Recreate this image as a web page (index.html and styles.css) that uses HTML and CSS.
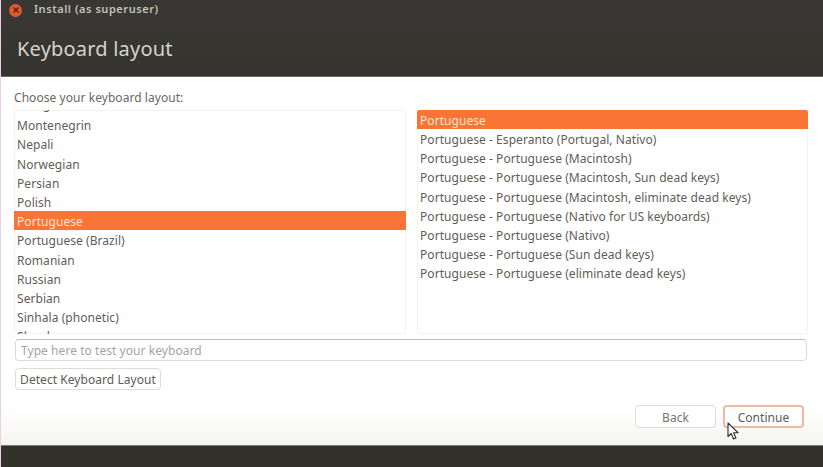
FILE: index.html
```html
<!DOCTYPE html>
<html lang="en">
<head>
<meta charset="utf-8">
<title>Install (as superuser)</title>
<link rel="stylesheet" href="styles.css">
</head>
<body>
<div class="window">
  <header class="titlebar">
    <span class="close"><svg width="8" height="8" viewBox="0 0 8 8"><path d="M1.5 1.5l5 5M6.5 1.5l-5 5" stroke="#4a2116" stroke-width="1.4" fill="none"/></svg></span>
    <span class="title">Install (as superuser)</span>
  </header>
  <div class="heading"><h1>Keyboard layout</h1></div>
  <main class="content">
    <label class="prompt">Choose your keyboard layout:</label>
    <div class="lists">
      <div class="list left">
        <ul class="rows scrolled">
          <li class="clipped">Mongolian</li><li>Montenegrin</li><li>Nepali</li><li>Norwegian</li><li>Persian</li><li>Polish</li>
          <li class="selected">Portuguese</li>
          <li>Portuguese (Brazil)</li><li>Romanian</li><li>Russian</li><li>Serbian</li><li>Sinhala (phonetic)</li><li>Slovak</li>
        </ul>
      </div>
      <div class="list right">
        <ul class="rows">
          <li class="selected">Portuguese</li>
          <li>Portuguese - Esperanto (Portugal, Nativo)</li>
          <li>Portuguese - Portuguese (Macintosh)</li>
          <li>Portuguese - Portuguese (Macintosh, Sun dead keys)</li>
          <li>Portuguese - Portuguese (Macintosh, eliminate dead keys)</li>
          <li>Portuguese - Portuguese (Nativo for US keyboards)</li>
          <li>Portuguese - Portuguese (Nativo)</li>
          <li>Portuguese - Portuguese (Sun dead keys)</li>
          <li>Portuguese - Portuguese (eliminate dead keys)</li>
        </ul>
      </div>
    </div>
    <input class="test" type="text" placeholder="Type here to test your keyboard">
    <button class="btn detect" type="button">Detect Keyboard Layout</button>
    <div class="actions">
      <button class="btn back" type="button">Back</button>
      <button class="btn continue" type="button">Continue</button>
    </div>
    <svg class="cursor" width="13" height="19" viewBox="0 0 13 19"><path d="M1 1v13.5l3.2-3 2.3 5.5 2.4-1-2.3-5.3h4.4z" fill="#fff" stroke="#2b2b2b" stroke-width="1.1" stroke-linejoin="round"/></svg>
  </main>
  <footer class="bottombar"></footer>
</div>
</body>
</html>
```
FILE: styles.css
```css
* { box-sizing: border-box; }
html, body { margin: 0; height: 100%; }
body {
  background: #e9cfe0;
  font-family: "Noto Sans", "Open Sans", sans-serif;
  font-size: 12px;
  letter-spacing: 0.055px;
  color: #5f5d57;
  overflow: hidden;
}
.window {
  margin-left: 1px;
  height: 467px;
  display: flex;
  flex-direction: column;
  background: #fff;
}
.titlebar {
  height: 20px;
  flex: none;
  display: flex;
  align-items: center;
  gap: 12px;
  padding-left: 8px;
  background: #383733;
  color: #c4c1b7;
  font-weight: 600;
  font-size: 11px;
}
.close {
  width: 13px;
  height: 13px;
  border-radius: 50%;
  background: #e2592c;
  display: flex;
  align-items: center;
  justify-content: center;
}
.title { letter-spacing: 0.55px; margin-bottom: 3px; }
.heading {
  height: 57px;
  flex: none;
  display: flex;
  align-items: center;
  padding: 1px 0 0 16px;
  background: linear-gradient(#383733, #34332e);
  border-bottom: 1px solid #6b6a64;
}
h1 {
  margin: 0;
  font-weight: 400;
  font-size: 20px;
  letter-spacing: 0.2px;
  color: #d6d3c9;
}
.content {
  position: relative;
  flex: 1;
  padding: 13px 15px 0 13px;
  display: flex;
  flex-direction: column;
  background: linear-gradient(#fff 0, #fff 90%, #f4f4f2 100%);
}
.prompt { height: 20px; line-height: 16.5px; color: #6a6862; }
.lists {
  display: flex;
  gap: 11px;
  height: 224px;
}
.list {
  overflow: hidden;
  box-shadow: inset 0 0 0 1px #f3f3f1;
  border-radius: 2px;
}
.left { flex: 0 0 392px; }
.right { flex: 1 1 0; }
.rows { margin: 0; padding: 0; list-style: none; }
.rows li {
  height: 19.2px;
  line-height: 21px;
  padding-left: 3px;
  white-space: nowrap;
}
.rows .clipped { line-height: 17px; }
.right .rows li { height: 19.15px; }
.scrolled { margin-top: -14px; }
.rows .selected { background: #fa7436; color: #fbe3d2; }
.test {
  margin: 5px 0 0 1px;
  height: 22px;
  width: 792px;
  padding: 0 5px;
  border: 1px solid #dcdbd6;
  border-top-color: #c2c1bb;
  border-radius: 4px;
  font: inherit;
  letter-spacing: inherit;
  background: #fff;
}
.test::placeholder { color: #a5a4a0; opacity: 1; }
.btn {
  height: 22px;
  border: 1px solid #dddcd7;
  border-radius: 4px;
  background: #fff;
  font: inherit;
  letter-spacing: inherit;
  color: #5d5b55;
}
.detect {
  align-self: flex-start;
  margin: 7px 0 0 1px;
  width: 146px;
  padding: 0;
}
.actions {
  display: flex;
  justify-content: flex-end;
  gap: 7px;
  margin-top: 15px;
  padding-right: 4px;
}
.back, .continue { width: 81px; height: 23px; padding: 1px 0 0; }
.back { color: #77756f; }
.continue { border: 2px solid #eeb9a0; }
.cursor { position: absolute; left: 726px; top: 345px; }
.bottombar {
  height: 22px;
  flex: none;
  background: #33312c;
  border-top: 1px solid #7a7974;
}
```
